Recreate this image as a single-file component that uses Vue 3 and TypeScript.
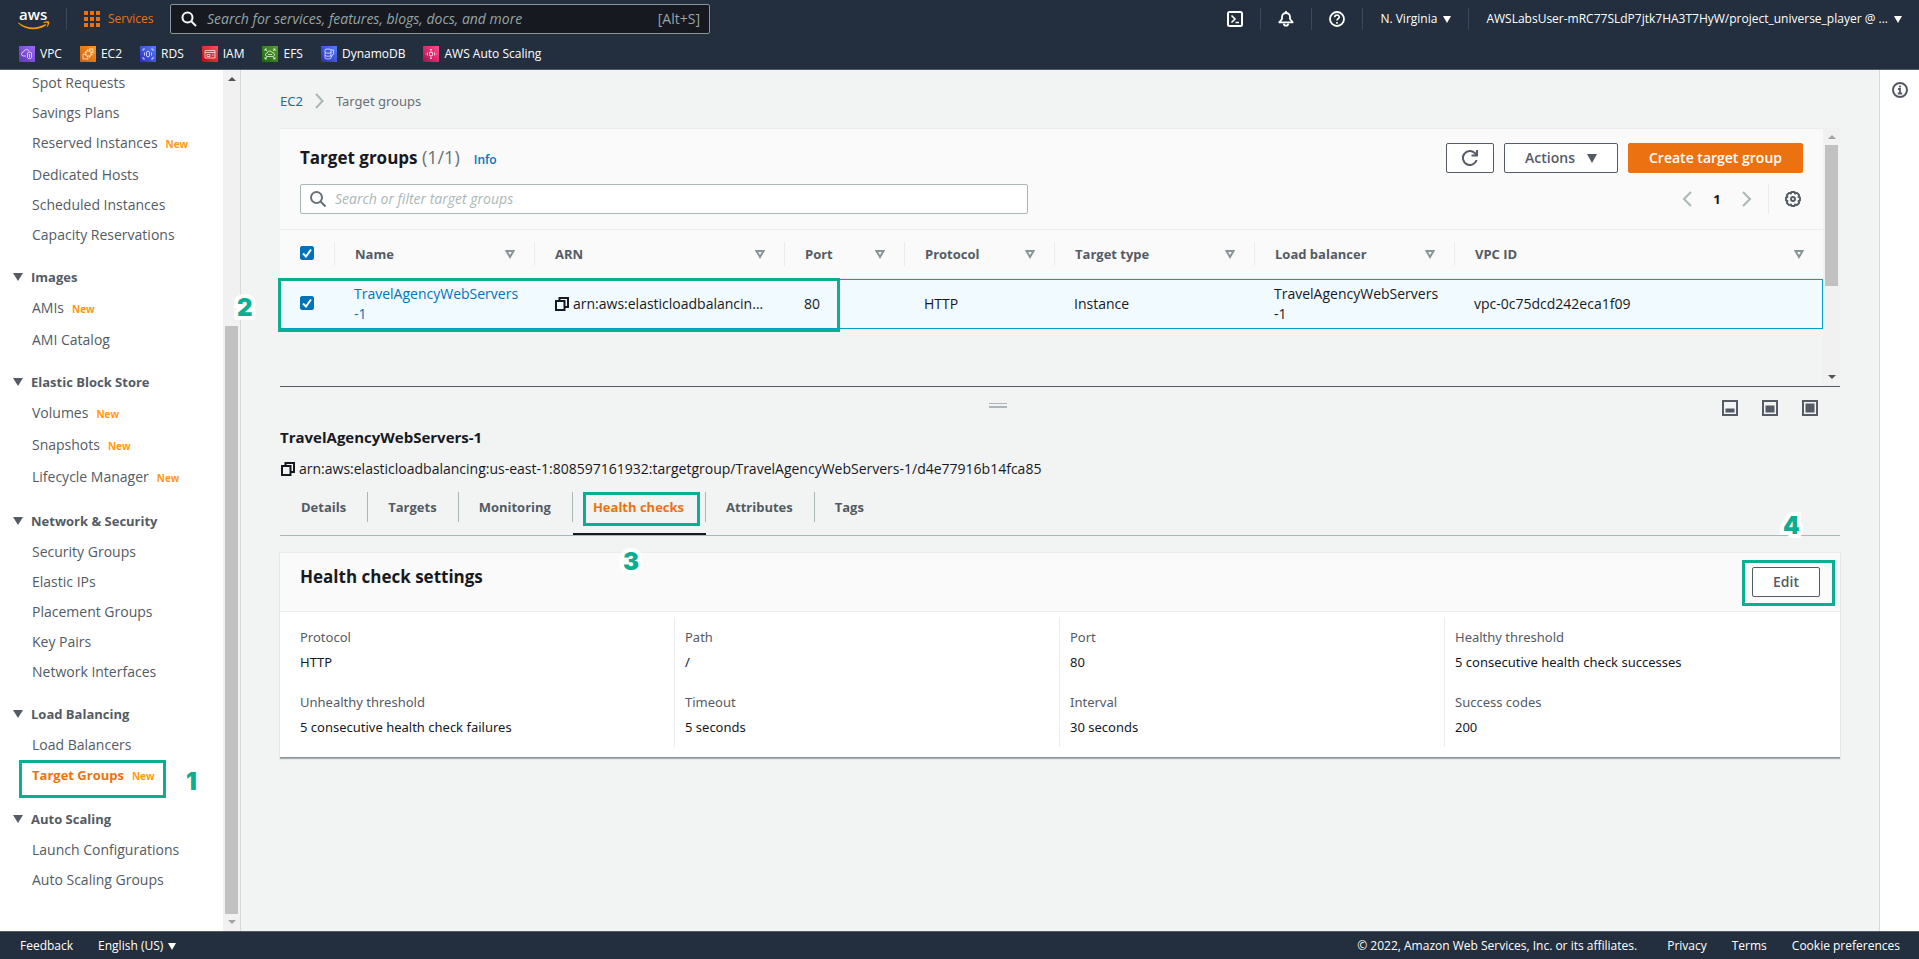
<script setup lang="ts">
import { ref } from 'vue'

interface Shortcut { name: string; from: string; to: string; path: string }
interface NavItem { label: string; isNew?: boolean; active?: boolean }
interface NavGroup { title?: string; items: NavItem[] }
interface Column { title: string; width?: string }
interface Setting { label: string; value: string }

const shortcuts: Shortcut[] = [
  { name: 'VPC', from: '#5b34c4', to: '#a06af5', path: 'M7 10H4.500a2 2 0 0 1 0-4A3 3 0 0 1 10 5M8.500 7v4.500c0 1.500 4 1.500 4 0V7c0-1.200-4-1.200-4 0zM10.500 8v3.500' },
  { name: 'EC2', from: '#d45b07', to: '#f8981d', path: 'M6 5h5v5H6zM4.500 8H3v5h5v-1.500M9 3.500V3h4v4h-.5M7.500 5V3.500M9.500 5V3.500M7.500 11.500V10M9.500 11.500V10M11 6.500h1.500M11 8.500h1.500M4.500 6.500H6M4.500 8.500H6' },
  { name: 'RDS', from: '#2e2bb8', to: '#527fff', path: 'M3 5V3h2M11 3h2v2M13 11v2h-2M5 13H3v-2M6.500 6v4c0 1 3 1 3 0V6c0-1-3-1-3 0zM4.500 6.500v3M11.500 6.500v3' },
  { name: 'IAM', from: '#bd0816', to: '#ff5252', path: 'M3 4.500h10v7.500H3zM3 6.500h10M5 8.500h3v2H5zM10 9h1.500' },
  { name: 'EFS', from: '#1b660f', to: '#5a9e2f', path: 'M5 10.500a1.700 1.700 0 0 1 .3-3.400 2.400 2.400 0 0 1 4.700-.4 1.900 1.900 0 0 1 1 3.800zM6 8.500h4M3 3l2 2M13 3l-2 2M3 13l2-2M13 13l-2-2M3 5V3h2M11 3h2v2M13 11v2h-2M5 13H3v-2' },
  { name: 'DynamoDB', from: '#2e2bb8', to: '#527fff', path: 'M4 4c0-1.300 6-1.300 6 0v8c0 1.300-6 1.300-6 0zM4 6.500c1 1 5 1 6 0M4 9.500c1 1 5 1 6 0M10 4h3l-1 3h1l-3 4' },
  { name: 'AWS Auto Scaling', from: '#b0084d', to: '#ff4f8b', path: 'M6.500 6.500h3v3h-3zM8 3v3M8 10v3M7 4l1-1 1 1M7 12l1 1 1-1M4.500 6.500v3M11.500 6.500v3M3 7.500v1M13 7.500v1' },
]

const groups: NavGroup[] = [
  {
    items: [
      { label: 'Spot Requests' },
      { label: 'Savings Plans' },
      { label: 'Reserved Instances', isNew: true },
      { label: 'Dedicated Hosts' },
      { label: 'Scheduled Instances' },
      { label: 'Capacity Reservations' },
    ],
  },
  { title: 'Images', items: [{ label: 'AMIs', isNew: true }, { label: 'AMI Catalog' }] },
  {
    title: 'Elastic Block Store',
    items: [
      { label: 'Volumes', isNew: true },
      { label: 'Snapshots', isNew: true },
      { label: 'Lifecycle Manager', isNew: true },
    ],
  },
  {
    title: 'Network & Security',
    items: [
      { label: 'Security Groups' },
      { label: 'Elastic IPs' },
      { label: 'Placement Groups' },
      { label: 'Key Pairs' },
      { label: 'Network Interfaces' },
    ],
  },
  { title: 'Load Balancing', items: [{ label: 'Load Balancers' }, { label: 'Target Groups', isNew: true, active: true }] },
  { title: 'Auto Scaling', items: [{ label: 'Launch Configurations' }, { label: 'Auto Scaling Groups' }] },
]

const columns: Column[] = [
  { title: 'Name', width: '200px' },
  { title: 'ARN', width: '250px' },
  { title: 'Port', width: '120px' },
  { title: 'Protocol', width: '150px' },
  { title: 'Target type', width: '200px' },
  { title: 'Load balancer', width: '200px' },
  { title: 'VPC ID' },
]

const tabs = ['Details', 'Targets', 'Monitoring', 'Health checks', 'Attributes', 'Tags']
const activeTab = ref('Health checks')
const rowSelected = ref(true)

const settings: Setting[][] = [
  [{ label: 'Protocol', value: 'HTTP' }, { label: 'Unhealthy threshold', value: '5 consecutive health check failures' }],
  [{ label: 'Path', value: '/' }, { label: 'Timeout', value: '5 seconds' }],
  [{ label: 'Port', value: '80' }, { label: 'Interval', value: '30 seconds' }],
  [{ label: 'Healthy threshold', value: '5 consecutive health check successes' }, { label: 'Success codes', value: '200' }],
]
</script>

<template>
  <div class="console">
    <header class="top">
      <div class="bar">
        <a href="#" class="logo" aria-label="AWS home">
          <svg width="34" height="28" viewBox="0 -4 34 28">
            <text x="1" y="13" font-size="15" font-weight="600" fill="#fff" font-family="Open Sans, sans-serif">aws</text>
            <path d="M0.500 15.500c8.500 6.300 18.500 6.300 26.500 1.800 1-.5 1.800.5.900 1.200C19.500 24.300 7.500 23.500.2 16.200c-.4-.4-.1-.9.300-.7z" fill="#f90" />
            <path d="M25.500 15.300c1.500-1 5-1.300 5.600-.6.500.7-.2 4-1.900 5.400-.4.300-.7.100-.5-.3.500-1.100 1.200-3.100.9-3.600-.4-.5-2.700-.4-3.800-.3-.5 0-.6-.3-.3-.6z" fill="#f90" />
          </svg>
        </a>
        <i class="rule logo-rule"></i>
        <button class="services">
          <svg width="16" height="16" viewBox="0 0 16 16" fill="#ec7211">
            <path d="M0 0h4v4H0zM6 0h4v4H6zM12 0h4v4h-4zM0 6h4v4H0zM6 6h4v4H6zM12 6h4v4h-4zM0 12h4v4H0zM6 12h4v4H6zM12 12h4v4h-4z" />
          </svg>
          Services
        </button>
        <label class="global-search">
          <svg width="16" height="16" viewBox="0 0 16 16" fill="none" stroke="#fafafa" stroke-width="2">
            <circle cx="6.500" cy="6.500" r="5" /><path d="M10 10l5 5" />
          </svg>
          <input type="search" aria-label="Search services" placeholder="Search for services, features, blogs, docs, and more" />
          <span>[Alt+S]</span>
        </label>
        <div class="tools">
          <button class="tool" aria-label="CloudShell">
            <svg width="16" height="16" viewBox="0 0 16 16" fill="none" stroke="#fff" stroke-width="2">
              <rect x="1" y="1" width="14" height="14" rx="1.500" /><path d="M4.500 4.500L8 8l-3.500 3.500M8.500 11.500h3.500" stroke-width="1.600" />
            </svg>
          </button>
          <button class="tool" aria-label="Notifications">
            <svg width="16" height="16" viewBox="0 0 16 16" fill="none" stroke="#fff" stroke-width="1.800" stroke-linejoin="round">
              <path d="M8 0v2M1.300 11.300h13.400L12 8V6a4 4 0 0 0-8 0v2z" /><path d="M5.800 12.500a2.200 2.200 0 0 0 4.400 0" />
            </svg>
          </button>
          <button class="tool" aria-label="Help">
            <svg width="16" height="16" viewBox="0 0 16 16" fill="none" stroke="#fff" stroke-width="1.800">
              <circle cx="8" cy="8" r="7" /><path d="M5.700 6.300c0-3 4.600-2.900 4.600-.3C10.300 7.700 8 7.700 8 9.600M8 11v1.800" stroke-width="1.600" />
            </svg>
          </button>
          <button class="tool menu">N. Virginia <i class="caret"></i></button>
          <button class="tool menu">AWSLabsUser-mRC77SLdP7jtk7HA3T7HyW/project_universe_player @ ... <i class="caret"></i></button>
        </div>
      </div>
      <nav class="favorites" aria-label="Favorites">
        <a v-for="(s, i) in shortcuts" :key="s.name" href="#">
          <svg width="16" height="16" viewBox="0 0 16 16" fill="none">
            <defs>
              <linearGradient :id="'tint' + i" x1="0" y1="1" x2="1" y2="0">
                <stop offset="0" :stop-color="s.from" /><stop offset="1" :stop-color="s.to" />
              </linearGradient>
            </defs>
            <rect width="16" height="16" :fill="'url(#tint' + i + ')'" />
            <path :d="s.path" stroke="#fff" stroke-width=".7" />
          </svg>
          {{ s.name }}
        </a>
      </nav>
    </header>

    <div class="body">
      <aside class="side">
        <nav aria-label="EC2">
          <section v-for="(g, i) in groups" :key="i">
            <h3 v-if="g.title"><i class="caret"></i>{{ g.title }}</h3>
            <ul>
              <li v-for="item in g.items" :key="item.label" :class="{ fresh: item.isNew, active: item.active }">
                <a href="#">{{ item.label }}</a><small v-if="item.isNew">New</small>
                <template v-if="item.active"><i class="mark mark-nav"></i><b class="step step-nav">1</b></template>
              </li>
            </ul>
          </section>
        </nav>
        <div class="track side-track"><i class="arrow up dark"></i><i class="thumb"></i><i class="arrow down"></i></div>
      </aside>

      <main>
        <nav class="crumbs" aria-label="Breadcrumb">
          <a href="#">EC2</a>
          <svg width="9" height="16" viewBox="0 0 9 16" fill="none" stroke="#aab7b8" stroke-width="2"><path d="M1 1l6.500 7L1 15" /></svg>
          <span>Target groups</span>
        </nav>

        <section class="list">
          <div class="list-main">
            <div class="list-head">
              <div class="row">
                <h2>Target groups <span>(1/1)</span></h2>
                <a href="#" class="info">Info</a>
                <div class="actions">
                  <button class="btn refresh" aria-label="Refresh">
                    <svg width="16" height="16" viewBox="0 0 16 16" fill="none" stroke="#545b64" stroke-width="2">
                      <path d="M14.600 10A7 7 0 1 1 13 3.200L15 5.200" /><path d="M15 0v5.500H9.500" />
                    </svg>
                  </button>
                  <button class="btn">Actions <i class="caret"></i></button>
                  <button class="btn primary">Create target group</button>
                </div>
              </div>
              <div class="row">
                <label class="filter">
                  <svg width="16" height="16" viewBox="0 0 16 16" fill="none" stroke="#687078" stroke-width="2">
                    <circle cx="6.500" cy="6.500" r="5.500" /><path d="M10.500 10.500l5 5" />
                  </svg>
                  <input type="search" aria-label="Filter target groups" placeholder="Search or filter target groups" />
                </label>
                <div class="pager">
                  <button aria-label="Previous page"><svg width="10" height="16" viewBox="0 0 10 16" fill="none" stroke="#aab7b8" stroke-width="2"><path d="M9 1L2 8l7 7" /></svg></button>
                  <button class="page">1</button>
                  <button aria-label="Next page"><svg width="10" height="16" viewBox="0 0 10 16" fill="none" stroke="#aab7b8" stroke-width="2"><path d="M1 1l7 7-7 7" /></svg></button>
                  <i></i>
                  <button aria-label="Preferences">
                    <svg width="16" height="16" viewBox="0 0 16 16" fill="none" stroke="#545b64" stroke-width="1.900" stroke-linejoin="round">
                      <path d="M6.500 1h3l.5 1.500 2-.6 2.100 2.100-.6 2 1.500.5v3l-1.500.5.600 2-2.100 2.100-2-.6-.5 1.500h-3L6 13.500l-2 .6L1.900 12l.6-2L1 9.500v-3L2.500 6l-.6-2L4 1.900l2 .6z" /><circle cx="8" cy="8" r="2" />
                    </svg>
                  </button>
                </div>
              </div>
            </div>
            <div class="table-wrap">
              <table>
                <colgroup>
                  <col class="pick" />
                  <col v-for="c in columns" :key="c.title" :style="{ width: c.width }" />
                </colgroup>
                <thead>
                  <tr>
                    <th><div><input type="checkbox" v-model="rowSelected" aria-label="Select all" /></div></th>
                    <th v-for="c in columns" :key="c.title">
                      <div>
                        {{ c.title }}
                        <svg width="10" height="9" viewBox="0 0 10 9" fill="none" stroke="#879596" stroke-width="2"><path d="M1.500 1h7L5 7z" /></svg>
                      </div>
                    </th>
                  </tr>
                </thead>
                <tbody>
                  <tr>
                    <td><input type="checkbox" v-model="rowSelected" aria-label="Select TravelAgencyWebServers-1" /></td>
                    <td><a href="#">TravelAgencyWebServers<br />-1</a></td>
                    <td>
                      <div class="arn">
                        <svg width="14" height="14" viewBox="0 0 14 14" fill="none" stroke="#16191f" stroke-width="2"><path d="M1 4h8.500v9H1z" /><path d="M4.500 4V1H13v9H9.500" /></svg>
                        <span>arn:aws:elasticloadbalancin…</span>
                      </div>
                    </td>
                    <td>80</td>
                    <td>HTTP</td>
                    <td>Instance</td>
                    <td>TravelAgencyWebServers<br />-1</td>
                    <td>vpc-0c75dcd242eca1f09</td>
                  </tr>
                </tbody>
              </table>
              <i class="mark mark-row"></i><b class="step step-row">2</b>
            </div>
          </div>
          <div class="track list-track"><i class="arrow up"></i><i class="thumb"></i><i class="arrow down dark"></i></div>
        </section>

        <div class="splitter">
          <i class="grip"></i>
          <div class="sizes">
            <button v-for="h in [4, 7, 10]" :key="h" aria-label="Panel size">
              <svg width="16" height="16" viewBox="0 0 16 16">
                <rect x="1" y="1" width="14" height="14" fill="#f2f3f3" stroke="#545b64" stroke-width="2" />
                <rect x="3.500" :y="12.500 - h + (h > 9 ? 1 : 0)" width="9" :height="h > 9 ? 9 : h" fill="#545b64" />
              </svg>
            </button>
          </div>
        </div>

        <h3 class="detail-title">TravelAgencyWebServers-1</h3>
        <div class="arn detail-arn">
          <svg width="14" height="14" viewBox="0 0 14 14" fill="none" stroke="#16191f" stroke-width="2"><path d="M1 4h8.500v9H1z" /><path d="M4.500 4V1H13v9H9.500" /></svg>
          <span>arn:aws:elasticloadbalancing:us-east-1:808597161932:targetgroup/TravelAgencyWebServers-1/d4e77916b14fca85</span>
        </div>

        <div class="tabs" role="tablist">
          <button v-for="t in tabs" :key="t" role="tab" :aria-selected="t === activeTab" :class="{ on: t === activeTab }" @click="activeTab = t">
            <span>{{ t }}</span>
            <template v-if="t === 'Health checks'"><i class="mark mark-tab"></i><b class="step step-tab">3</b></template>
          </button>
        </div>

        <section class="card">
          <div class="card-head">
            <h2>Health check settings</h2>
            <div class="edit">
              <button class="btn">Edit</button>
              <i class="mark mark-edit"></i><b class="step step-edit">4</b>
            </div>
          </div>
          <div class="grid">
            <dl v-for="(col, i) in settings" :key="i">
              <template v-for="s in col" :key="s.label">
                <dt>{{ s.label }}</dt>
                <dd>{{ s.value }}</dd>
              </template>
            </dl>
          </div>
        </section>
      </main>

      <aside class="help">
        <button aria-label="Open help panel">
          <svg width="16" height="16" viewBox="0 0 16 16" fill="none" stroke="#545b64" stroke-width="2">
            <circle cx="8" cy="8" r="7" /><path d="M8 3.500v2M6 7h2v4.500M5.800 11.500h4.400" stroke-width="1.800" />
          </svg>
        </button>
      </aside>
    </div>

    <footer>
      <a href="#">Feedback</a>
      <button>English (US) <i class="caret"></i></button>
      <span>© 2022, Amazon Web Services, Inc. or its affiliates.</span>
      <a href="#">Privacy</a>
      <a href="#">Terms</a>
      <a href="#">Cookie preferences</a>
    </footer>
  </div>
</template>

<style>
body { margin: 0; }
</style>

<style scoped>
* { box-sizing: border-box; }
.console {
  height: 100vh;
  display: flex;
  flex-direction: column;
  overflow: hidden;
  font: 14px/20px "Open Sans", "Noto Sans", sans-serif;
  color: #16191f;
  background: #f2f3f3;
}
button { font: inherit; color: inherit; background: none; border: 0; padding: 0; cursor: pointer; }
button svg, a svg, label svg { display: block; flex: none; }
a { color: #0073bb; text-decoration: none; }
h2, h3, ul, dl, dd { margin: 0; padding: 0; }
i { font-style: normal; }
input { font: inherit; margin: 0; }

.caret {
  display: inline-block;
  border: 4px solid transparent;
  border-top: 7px solid currentColor;
  border-bottom: 0;
}

/* header */
.top { background: #232f3e; color: #fff; border-bottom: 1px solid #545b64; height: 70px; flex: none; font-size: 12px; font-weight: 500; }
.bar { display: flex; align-items: center; height: 38px; padding-left: 18px; }
.logo { margin-bottom: 4px; }
.rule { width: 1px; height: 22px; background: #3e4957; }
.logo-rule { margin: 0 17px 0 14px; }
.services { display: flex; align-items: center; gap: 8px; color: #ec7211; font-weight: 400; width: 86px; white-space: nowrap; }
.global-search {
  display: flex; align-items: center; gap: 10px; width: 540px; height: 30px; padding: 0 9px 0 10px;
  background: #16191f; border: 1px solid #879596; border-radius: 2px;
}
.global-search input { flex: 1; min-width: 0; padding: 0; background: none; border: 0; outline: 0; color: #fff; font-size: 14px; font-weight: 400; }
.global-search input::placeholder { color: #95a5a6; opacity: 1; font-style: italic; }
.global-search span { color: #95a5a6; font-size: 14px; font-weight: 400; }
.tools { display: flex; margin-left: auto; }
.tool { display: flex; align-items: center; height: 22px; padding: 0 17px; border-left: 1px solid #3e4957; white-space: nowrap; }
.tool:first-child { border-left: 0; }
.menu { gap: 6px; }
.favorites { display: flex; gap: 18px; padding: 8px 19px; }
.favorites a { display: flex; gap: 5px; color: #fff; line-height: 16px; }

/* layout */
.body { flex: 1; display: flex; min-height: 0; }
.side { width: 241px; flex: none; display: flex; background: #fff; border-right: 1px solid #d5dbdb; color: #545b64; }
.side nav { flex: 1; }
.track { width: 17px; flex: none; display: flex; flex-direction: column; align-items: center; background: #f1f1f1; }
.thumb { width: 13px; background: #c1c1c1; }
.arrow { border: 4px solid transparent; }
.up { border-top: 0; border-bottom-color: #a3a3a3; margin: 7px 0 6px; }
.down { border-bottom: 0; border-top-color: #a3a3a3; margin: 6px 0 7px; }
.up.dark { border-bottom-color: #505050; }
.down.dark { border-top-color: #505050; }
.side-track { justify-content: space-between; }
.side-track .thumb { height: 588px; margin-top: auto; }
.side h3 { display: flex; align-items: center; gap: 8px; margin-top: 12px; padding: 3px 0 8px 13px; font-size: 13px; font-weight: 700; }
.side h3 .caret { border-width: 8px 5px 0; }
.side ul { list-style: none; }
.side li { position: relative; display: flex; padding: 3px 0 7px 32px; }
.side li.fresh { padding-bottom: 8px; }
.side li a { color: #545b64; }
.side small { margin-left: 8px; font-size: 10px; font-weight: 700; color: #ff9914; padding-top: 1px; }
.side li.active a { color: #ec7211; font-size: 13px; font-weight: 700; }

main { flex: 1; min-width: 0; padding: 0 39px; }
.crumbs { display: flex; align-items: center; gap: 12px; height: 58px; padding-top: 4px; color: #687078; font-size: 13px; font-family: "Noto Sans", sans-serif; }

/* target group list */
.list { display: flex; border-bottom: 1px solid #545b64; }
.list-main { flex: 1; min-width: 0; border-top: 1px solid #eaeded; padding-bottom: 57px; }
.list-head { background: #fafafa; padding: 14px 20px 15px; display: grid; gap: 11px; border-bottom: 1px solid #eaeded; }
.row { display: flex; align-items: center; height: 30px; }
h2 { font-size: 17px; line-height: 20px; padding-bottom: 2px; font-weight: 700; }
h2 span { font-weight: 400; font-size: 18px; color: #687078; }
.info { font-size: 12px; font-weight: 600; margin: 3px 0 0 14px; }
.actions { display: flex; gap: 10px; margin-left: auto; }
.btn {
  display: flex; align-items: center; gap: 12px; height: 30px; padding: 0 20px;
  background: #fff; border: 1px solid #545b64; border-radius: 2px; color: #545b64; font-weight: 600;
}
.btn .caret { border-width: 9px 5px 0; }
.refresh { padding: 0 15px; }
.primary { background: #ec7211; border-color: #ec7211; color: #fff; }
.filter { display: flex; align-items: center; gap: 9px; width: 728px; height: 30px; padding: 0 9px; background: #fff; border: 1px solid #aab7b8; border-radius: 2px; }
.filter input { flex: 1; padding: 0; border: 0; outline: 0; background: none; }
.filter input::placeholder { color: #aab7b8; opacity: 1; font-style: italic; }
.pager { margin-left: auto; display: flex; align-items: center; }
.pager i { width: 1px; height: 30px; background: #eaeded; margin: 0 16px; }
.pager button:last-child { margin-right: 2px; }
.page { width: 50px; font-size: 13px; font-weight: 700; }

.table-wrap { position: relative; }
table { width: 100%; table-layout: fixed; border-collapse: separate; border-spacing: 0; }
.pick { width: 55px; }
th { padding: 12px 0; background: #fafafa; border-bottom: 1px solid #eaeded; text-align: left; color: #545b64; font-size: 13px; font-weight: 700; }
th div { display: flex; align-items: center; justify-content: space-between; height: 24px; padding: 0 19px 0 20px; border-right: 1px solid #eaeded; }
th:last-child div { border-right: 0; }
td { height: 50px; padding: 4px 0 4px 19px; background: #f1faff; border: solid #00a1c9; border-width: 1px 0; vertical-align: middle; }
td:first-child { padding-left: 20px; }
td:last-child { border-right-width: 1px; }
input[type="checkbox"] {
  appearance: none; display: block; width: 14px; height: 14px; margin-bottom: 2px; border: 1px solid #0073bb; border-radius: 2px; background: #fff;
}
input[type="checkbox"]:checked {
  background: #0073bb url("data:image/svg+xml,%3Csvg xmlns='http://www.w3.org/2000/svg' viewBox='0 0 12 12' fill='none' stroke='white' stroke-width='2'%3E%3Cpath d='M2 6.500l3 3 5-7'/%3E%3C/svg%3E") center / 12px no-repeat;
}
.arn { display: flex; align-items: center; gap: 4px; padding-left: 1px; white-space: nowrap; }
.arn svg { flex: none; }
.list-track .thumb { height: 141px; margin-bottom: auto; }

/* details */
.splitter { position: relative; display: flex; justify-content: flex-end; height: 42px; padding: 13px 22px 0; }
.grip { position: absolute; left: 50%; top: 16px; width: 18px; height: 5px; margin-left: -71px; border: solid #aab7b8; border-width: 1px 0 2px; }
.sizes { display: flex; gap: 24px; }
.sizes button { height: 16px; }
.detail-title { font-size: 15px; line-height: 16px; font-weight: 700; padding-bottom: 14px; }
.tabs { display: flex; border-bottom: 1px solid #aab7b8; margin-top: 13px; padding-left: 1px; }
.tabs button { position: relative; padding-bottom: 13px; color: #545b64; font-size: 13px; font-weight: 700; }
.tabs span { display: block; line-height: 30px; padding: 0 21px 0 20px; border-right: 1px solid #aab7b8; }
.tabs button:last-child span { border-right: 0; }
.tabs .on { border-bottom: 2px solid #16191f; padding-bottom: 11px; }
.tabs .on > span { color: #ec7211; }

.card { margin-top: 16px; background: #fff; border-top: 1px solid #eaeded; border-bottom: 1px solid #879596; box-shadow: 0 1px 1px rgba(0, 28, 36, .3); }
.card-head { display: flex; justify-content: space-between; height: 59px; padding: 14px 20px; background: #fafafa; border-bottom: 1px solid #eaeded; }
.edit { position: relative; }
.grid { display: grid; grid-template-columns: repeat(4, 1fr); padding: 5px 10px 10px; font-size: 13px; font-family: "Noto Sans", sans-serif; }
.grid dl { padding: 10px; border-right: 1px solid #eaeded; }
.grid dl:last-child { border-right: 0; }
dt { color: #545b64; padding-bottom: 5px; }
dd + dt { margin-top: 20px; }

.help { width: 40px; flex: none; background: #fff; border-left: 1px solid #d5dbdb; padding: 12px; }

/* walkthrough markers lie over the console */
.mark { position: absolute; border: 3px solid #09af90; pointer-events: none; z-index: 2; }
.step {
  position: absolute; z-index: 3; pointer-events: none; color: #09af90;
  font: 900 24px/24px Inter, sans-serif; -webkit-text-stroke: 8px #fff; stroke-linejoin: round; paint-order: stroke fill;
}
.mark-nav { left: 19px; top: -2px; width: 147px; height: 38px; }
.step-nav { left: 186px; top: 8px; }
.mark-row { left: -2px; top: 48px; width: 562px; height: 54px; }
.step-row { left: -43px; top: 66px; }
.mark-tab { left: 10px; right: 6px; top: 0; height: 34px; }
.step-tab { left: 50px; top: 58px; }
.mark-edit { left: -10px; right: -15px; top: -7px; height: 46px; }
.step-edit { left: 31px; top: -53px; }

footer { display: flex; align-items: center; height: 28px; flex: none; padding: 0 19px 0 20px; background: #232f3e; border-top: 1px solid #545b64; color: #fff; font-size: 12px; font-weight: 500; gap: 25px; }
footer a { color: #fff; }
footer span { margin-left: auto; margin-right: 5px; }
footer .caret { margin-left: 2px; }
</style>
